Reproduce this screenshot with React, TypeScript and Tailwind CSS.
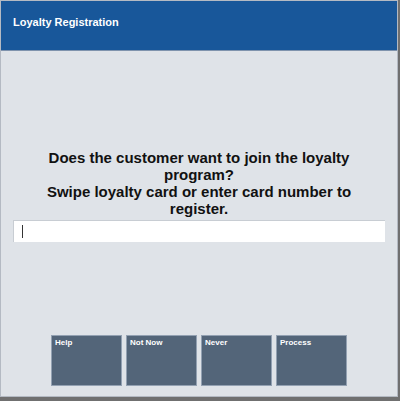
export default function App() {
  const buttons = ["Help", "Not Now", "Never", "Process"];
  return (
    <div className="w-[400px] h-[401px] bg-[#707070] flex flex-col" style={{ fontFamily: '"Liberation Sans", Arial, sans-serif' }}>
      <div className="w-[398px] h-[397px] flex flex-col border border-[#b4bac3] bg-[#dfe3e8]">
        <div className="h-[50px] bg-[#18579a] flex items-start pl-[12px] pt-[14px] border-b border-[#7f93ad]">
          <span className="text-white font-bold text-[11px] leading-[14px]">Loyalty Registration</span>
        </div>
        <div className="flex-1 flex flex-col">
          <div className="pt-[98px] flex flex-col items-center text-center text-[#111] font-bold text-[15px] leading-[17px]">
            <div>Does the customer want to join the loyalty</div>
            <div>program?</div>
            <div>Swipe loyalty card or enter card number to</div>
            <div>register.</div>
          </div>
          <div className="mt-[3px] mx-[12px] h-[22px] bg-white border-t border-l border-[#c8cdd3] flex items-center pl-[8px]">
            <div className="w-[1px] h-[13px] bg-[#333]"></div>
          </div>
          <div className="mt-[93px] flex gap-[4px] pl-[50px]">
            {buttons.map((b) => (
              <div key={b} className="w-[71px] h-[51px] bg-[#536579] border border-[#93a1b2] px-[3px] pt-[2px]">
                <span className="text-white font-bold text-[8px] leading-[10px] block">{b}</span>
              </div>
            ))}
          </div>
        </div>
      </div>
    </div>
  );
}
